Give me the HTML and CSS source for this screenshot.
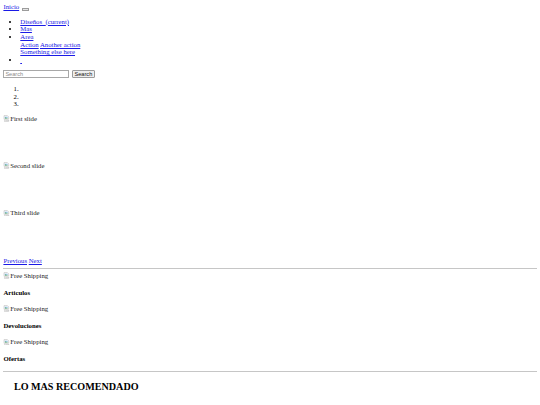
FILE: index.html
```html
<!DOCTYPE html>
<html lang="es">
<head>
    <meta charset="UTF-8">
    <meta name="viewport" content="width=device-width, initial-scale=1.0">
    <title>Inicio</title>
    <link rel="stylesheet" href="styles.css">
</head>
<body>
    <nav class="navbar">
        <a class="navbar-brand" href="#">Inicio</a>
        <button class="navbar-toggler" type="button"></button>

        <div class="navbar-collapse">
            <ul class="navbar-nav">
                <li><a href="#">Diseños&nbsp; <span>(current)</span></a></li>
                <li><a href="#">Mas</a></li>
                <li>
                    <a href="#">Area</a>
                    <div class="dropdown-menu">
                        <a href="#">Action</a>
                        <a href="#">Another action</a>
                        <div class="dropdown-divider"></div>
                        <a href="#">Something else here</a>
                    </div>
                </li>
                <li><a href="#">&nbsp;</a></li>
            </ul>
            <form class="search-form">
                <input class="search-input" type="search" placeholder="Search">
                <button class="search-btn" type="submit">Search</button>
            </form>
        </div>
    </nav>

    <div class="carousel">
        <ol class="carousel-indicators">
            <li></li>
            <li></li>
            <li></li>
        </ol>
        <div class="carousel-inner">
            <div class="carousel-item">
                <span class="img-alt"><svg class="broken-icon" viewBox="0 0 16 16"><path d="M2.5 1.5h8l3 3v5l-2 1.5-2-1.5-2 1.5-2-1.5-2 1.5-1-.8z" fill="#fff" stroke="#9a9a9a"/><rect x="4" y="4" width="7" height="4" fill="#9fc7ee"/><path d="M4 8l2.5-2.5 2 2 1.5-1 1 1.5z" fill="#55a04b"/><path d="M3.5 13.5l2-1.5 2 1.5 2-1.5 2 1.5 2-1.5v3h-10z" fill="#fff" stroke="#9a9a9a"/></svg>First slide</span>
            </div>
            <div class="carousel-item">
                <span class="img-alt"><svg class="broken-icon" viewBox="0 0 16 16"><path d="M2.5 1.5h8l3 3v5l-2 1.5-2-1.5-2 1.5-2-1.5-2 1.5-1-.8z" fill="#fff" stroke="#9a9a9a"/><rect x="4" y="4" width="7" height="4" fill="#9fc7ee"/><path d="M4 8l2.5-2.5 2 2 1.5-1 1 1.5z" fill="#55a04b"/><path d="M3.5 13.5l2-1.5 2 1.5 2-1.5 2 1.5 2-1.5v3h-10z" fill="#fff" stroke="#9a9a9a"/></svg>Second slide</span>
            </div>
            <div class="carousel-item">
                <span class="img-alt"><svg class="broken-icon" viewBox="0 0 16 16"><path d="M2.5 1.5h8l3 3v5l-2 1.5-2-1.5-2 1.5-2-1.5-2 1.5-1-.8z" fill="#fff" stroke="#9a9a9a"/><rect x="4" y="4" width="7" height="4" fill="#9fc7ee"/><path d="M4 8l2.5-2.5 2 2 1.5-1 1 1.5z" fill="#55a04b"/><path d="M3.5 13.5l2-1.5 2 1.5 2-1.5 2 1.5 2-1.5v3h-10z" fill="#fff" stroke="#9a9a9a"/></svg>Third slide</span>
            </div>
        </div>
        <a class="carousel-control" href="#">Previous</a>
        <a class="carousel-control" href="#">Next</a>
    </div>

    <hr class="rule">

    <div class="features">
        <div class="feature">
            <span class="img-alt"><svg class="broken-icon" viewBox="0 0 16 16"><path d="M2.5 1.5h8l3 3v5l-2 1.5-2-1.5-2 1.5-2-1.5-2 1.5-1-.8z" fill="#fff" stroke="#9a9a9a"/><rect x="4" y="4" width="7" height="4" fill="#9fc7ee"/><path d="M4 8l2.5-2.5 2 2 1.5-1 1 1.5z" fill="#55a04b"/><path d="M3.5 13.5l2-1.5 2 1.5 2-1.5 2 1.5 2-1.5v3h-10z" fill="#fff" stroke="#9a9a9a"/></svg>Free Shipping</span>
            <h4 class="feature-title">Articulos</h4>
        </div>
        <div class="feature">
            <span class="img-alt"><svg class="broken-icon" viewBox="0 0 16 16"><path d="M2.5 1.5h8l3 3v5l-2 1.5-2-1.5-2 1.5-2-1.5-2 1.5-1-.8z" fill="#fff" stroke="#9a9a9a"/><rect x="4" y="4" width="7" height="4" fill="#9fc7ee"/><path d="M4 8l2.5-2.5 2 2 1.5-1 1 1.5z" fill="#55a04b"/><path d="M3.5 13.5l2-1.5 2 1.5 2-1.5 2 1.5 2-1.5v3h-10z" fill="#fff" stroke="#9a9a9a"/></svg>Free Shipping</span>
            <h4 class="feature-title">Devoluciones</h4>
        </div>
        <div class="feature">
            <span class="img-alt"><svg class="broken-icon" viewBox="0 0 16 16"><path d="M2.5 1.5h8l3 3v5l-2 1.5-2-1.5-2 1.5-2-1.5-2 1.5-1-.8z" fill="#fff" stroke="#9a9a9a"/><rect x="4" y="4" width="7" height="4" fill="#9fc7ee"/><path d="M4 8l2.5-2.5 2 2 1.5-1 1 1.5z" fill="#55a04b"/><path d="M3.5 13.5l2-1.5 2 1.5 2-1.5 2 1.5 2-1.5v3h-10z" fill="#fff" stroke="#9a9a9a"/></svg>Free Shipping</span>
            <h4 class="feature-title">Ofertas</h4>
        </div>
    </div>

    <hr class="rule section-rule">

    <h2 class="section-title">LO MAS RECOMENDADO</h2>
</body>
</html>
```

FILE: styles.css
```css
/* sizes are a 1280px-wide page shown at 540px (x 0.42) */
body {
    margin: 3.4px;
    font-family: "Liberation Serif", "Times New Roman", serif;
    font-size: 6.75px;
    line-height: 7.6px;
    color: #000;
    background-color: #fff;
}

a {
    color: #1a1ae6;
}

.navbar-toggler {
    display: inline-block;
    width: 7px;
    height: 3.5px;
    padding: 0;
    margin-left: 1px;
    border: 1px solid #9c9c9c;
    background-color: #e6e6e6;
    vertical-align: -1px;
}

.navbar-nav {
    margin: 6.5px 0;
    padding-left: 16.9px;
}

.search-form {
    display: flex;
    align-items: center;
    gap: 2.5px;
    height: 8.5px;
}

.search-input,
.search-btn {
    box-sizing: border-box;
    height: 8.5px;
    margin: 0;
    font-family: "Liberation Sans", Arial, sans-serif;
    font-size: 5.6px;
    line-height: 6px;
}

.search-input {
    width: 66px;
    padding: 0 1px;
    border: 1px solid #a8a8a8;
}

.search-input::placeholder {
    color: #8a8a8a;
}

.search-btn {
    width: 23px;
    padding: 0;
    border: 1px solid #9c9c9c;
    border-radius: 1px;
    background-color: #efefef;
    color: #111;
}

.carousel-indicators {
    margin: 6.75px 0;
    padding-left: 16.9px;
}

.carousel-item {
    height: 47.3px;
}

.img-alt {
    color: #222;
}

.broken-icon {
    width: 6.75px;
    height: 6.75px;
    vertical-align: -1px;
}

.rule {
    margin: 3.4px 0;
    border: 0;
    border-top: 1px solid #c6c6c6;
}

.feature-title {
    font-size: 6.75px;
    line-height: 7.6px;
    margin: 8.98px 0;
}

.section-title {
    font-size: 10.125px;
    line-height: 11.6px;
    margin: 8.4px 0;
    padding-left: 10.5px;
}
```
